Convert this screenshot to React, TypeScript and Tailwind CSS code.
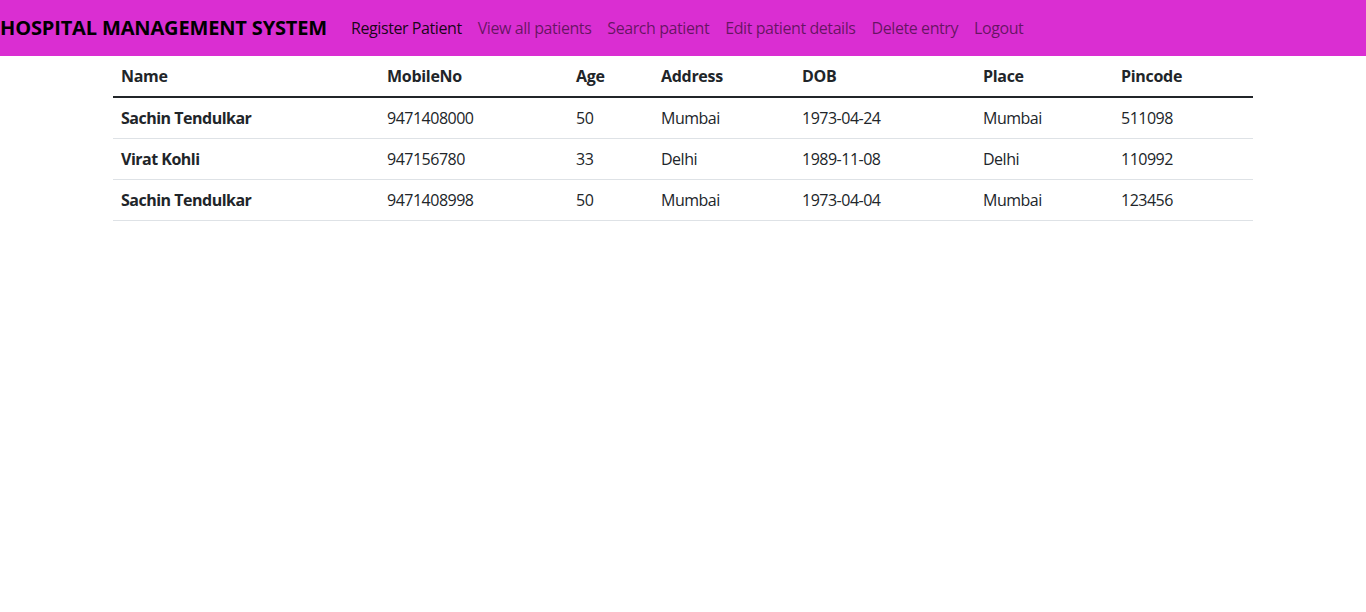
const navLinks = [
  { label: 'Register Patient', active: true },
  { label: 'View all patients' },
  { label: 'Search patient' },
  { label: 'Edit patient details' },
  { label: 'Delete entry' },
  { label: 'Logout' },
]

const columns = [
  { label: 'Name', w: 'w-[266px]' },
  { label: 'MobileNo', w: 'w-[189px]' },
  { label: 'Age', w: 'w-[85px]' },
  { label: 'Address', w: 'w-[141px]' },
  { label: 'DOB', w: 'w-[181px]' },
  { label: 'Place', w: 'w-[138px]' },
  { label: 'Pincode', w: 'w-[140px]' },
]

const patients = [
  ['Sachin Tendulkar', '9471408000', '50', 'Mumbai', '1973-04-24', 'Mumbai', '511098'],
  ['Virat Kohli', '947156780', '33', 'Delhi', '1989-11-08', 'Delhi', '110992'],
  ['Sachin Tendulkar', '9471408998', '50', 'Mumbai', '1973-04-04', 'Mumbai', '123456'],
]

export default function App() {
  return (
    <div className="min-h-screen bg-white text-[#212529] font-['Open_Sans',sans-serif] text-base">
      <nav className="flex items-center h-14 bg-[#da2ed2]">
        <span className="text-[20px] font-bold leading-[30px] text-black mr-4 tracking-[-0.15px]">
          HOSPITAL MANAGEMENT SYSTEM
        </span>
        <div className="flex">
          {navLinks.map((l) => (
            <a
              key={l.label}
              className={`px-2 leading-6 tracking-[-0.42px] ${l.active ? 'text-black/90' : 'text-black/55'}`}
            >
              {l.label}
            </a>
          ))}
        </div>
      </nav>

      <div className="w-[1140px] mx-auto">
        <table className="w-full border-collapse table-fixed">
          <thead>
            <tr className="border-b-2 border-[#212529]">
              {columns.map((c) => (
                <th key={c.label} className={`${c.w} text-left font-bold px-2 py-2 leading-6 tracking-[-0.3px]`}>
                  {c.label}
                </th>
              ))}
            </tr>
          </thead>
          <tbody>
            {patients.map((row, i) => (
              <tr key={i} className="border-b border-[#dee2e6]">
                {row.map((cell, j) => (
                  <td key={j} className={`px-2 py-2 leading-6 tracking-[-0.5px] ${j === 0 ? 'font-bold' : ''}`}>
                    {cell}
                  </td>
                ))}
              </tr>
            ))}
          </tbody>
        </table>
      </div>
    </div>
  )
}
